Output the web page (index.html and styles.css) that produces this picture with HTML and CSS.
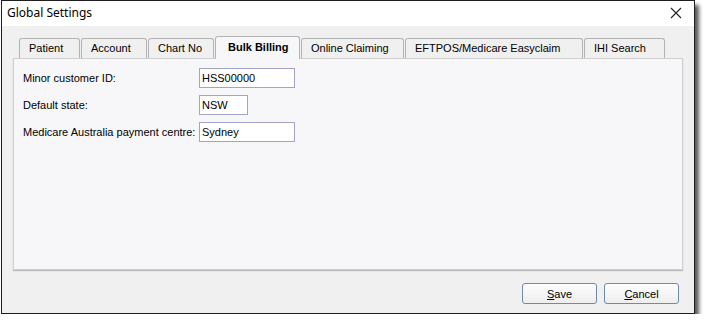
FILE: index.html
```html
<!DOCTYPE html>
<html lang="en">

<head>
    <meta charset="UTF-8">
    <title>Global Settings</title>
    <link rel="stylesheet" href="styles.css">
</head>

<body>
    <div class="window">
        <div class="titlebar">
            <span class="title">Global Settings</span>
            <svg class="close" width="12" height="12" viewBox="0 0 12 12">
                <path d="M1 1 L11 11 M11 1 L1 11" stroke="#222" stroke-width="1.1" fill="none" />
            </svg>
        </div>

        <div class="client">
            <div class="tabs">
                <div class="tab t-patient">Patient</div>
                <div class="tab t-account">Account</div>
                <div class="tab t-chart">Chart No</div>
                <div class="tab active t-bulk">Bulk Billing</div>
                <div class="tab t-online">Online Claiming</div>
                <div class="tab t-eftpos">EFTPOS/Medicare Easyclaim</div>
                <div class="tab t-ihi">IHI Search</div>
            </div>

            <div class="panel">
                <div class="field">
                    <label>Minor customer ID:</label>
                    <div class="input wide">HSS00000</div>
                </div>
                <div class="field">
                    <label>Default state:</label>
                    <div class="input narrow">NSW</div>
                </div>
                <div class="field">
                    <label>Medicare Australia payment centre:</label>
                    <div class="input wide">Sydney</div>
                </div>
            </div>

            <div class="buttons">
                <button class="btn"><u>S</u>ave</button>
                <button class="btn"><u>C</u>ancel</button>
            </div>
        </div>
    </div>
</body>

</html>
```

FILE: styles.css
```css
/* Global Styles */
body {
    margin: 0;
    padding: 0;
    background-color: #fff;
    font-family: 'Liberation Sans', Arial, sans-serif;
    font-size: 11px;
    color: #000;
}

.window {
    margin-left: 1px;
    width: 692px;
    height: 312px;
    border: 1px solid #1e1e1e;
    background-color: #f0f0f0;
    box-shadow: 4px 5px 4px rgba(0, 0, 0, 0.65);
    display: flex;
    flex-direction: column;
}

/* Title bar */
.titlebar {
    height: 25px;
    background-color: #fff;
    display: flex;
    align-items: center;
    justify-content: space-between;
    padding: 0 10px 0 5px;
}

.title {
    font-family: 'Noto Sans', sans-serif;
    font-size: 12px;
    padding-bottom: 2px;
}

.close {
    margin-right: 2px;
    margin-bottom: 1px;
}

/* Client area */
.client {
    padding: 10px 11px 0 11px;
    display: flex;
    flex-direction: column;
}

.tabs {
    display: flex;
    align-items: flex-end;
    gap: 1px;
    padding-left: 6px;
    height: 22px;
}

.tab {
    flex-shrink: 0;
    overflow: hidden;
    border: 1px solid #b4b4b4;
    border-bottom: none;
    border-radius: 3px 3px 0 0;
    background-color: #f0f0f0;
    box-sizing: border-box;
    height: 20px;
    padding-left: 9px;
    line-height: 19px;
    white-space: nowrap;
}

.tab.active {
    height: 23px;
    margin-bottom: -1px;
    background-color: #f7f7fa;
    font-weight: bold;
    padding-left: 12px;
    line-height: 20px;
    position: relative;
}

.t-patient { width: 61px; }
.t-account { width: 66px; }
.t-chart { width: 66px; }
.t-bulk { width: 85px; }
.t-online { width: 103px; }
.t-eftpos { width: 178px; }
.t-ihi { width: 81px; }

.panel {
    background-color: #f7f7fa;
    border: 1px solid #cfcfcf;
    box-shadow: 0 1px 1px rgba(0, 0, 0, 0.22);
    padding: 9px 9px 0 9px;
    height: 201px;
    width: 650px;
}

.field {
    display: flex;
    align-items: center;
    height: 20px;
    margin-bottom: 7px;
}

.field label {
    width: 176px;
    white-space: nowrap;
}

.input {
    height: 20px;
    box-sizing: border-box;
    border: 1px solid #a3a3c8;
    background-color: #fff;
    padding-left: 2px;
    line-height: 18px;
}

.input.wide { width: 96px; }
.input.narrow { width: 49px; }

/* Buttons */
.buttons {
    display: flex;
    justify-content: flex-end;
    gap: 7px;
    padding-right: 4px;
    margin-top: 13px;
}

.btn {
    width: 75px;
    height: 21px;
    border: 1px solid #7089ad;
    border-radius: 3px;
    background: linear-gradient(#fdfdfd, #eeeeee);
    font-family: 'Liberation Sans', Arial, sans-serif;
    font-size: 11px;
    padding: 0;
    color: #000;
}
```
